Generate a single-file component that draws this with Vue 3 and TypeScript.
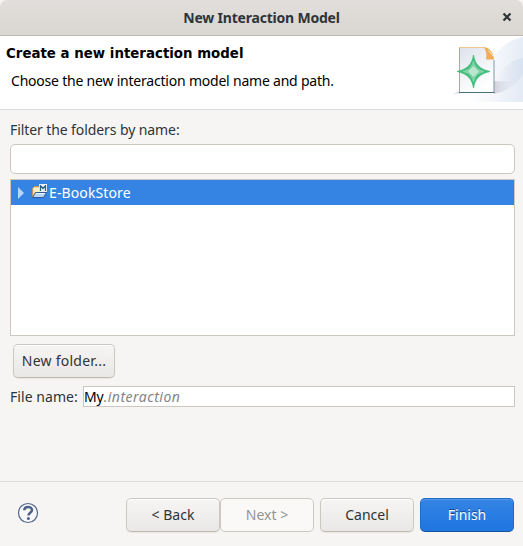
<script setup lang="ts">
import { ref } from 'vue'

interface WizardAction {
  id: string
  label: string
  disabled?: boolean
}

const filter = ref('')
const baseName = ref('My')
const actions: WizardAction[] = [
  { id: 'back', label: '< Back' },
  { id: 'next', label: 'Next >', disabled: true },
  { id: 'cancel', label: 'Cancel' },
  { id: 'finish', label: 'Finish' },
]
</script>

<template>
  <div class="dialog">
    <header class="titlebar">
      <span class="spacer"></span>
      <span class="caption">New Interaction Model</span>
      <span class="close">
        <svg width="10" height="10" viewBox="0 0 10 10"><path d="M1.500 1.500l7 7M8.500 1.500l-7 7" stroke="#2e3436" stroke-width="2.200" /></svg>
      </span>
    </header>

    <section class="banner">
      <div class="intro">
        <h1>Create a new interaction model</h1>
        <p>Choose the new interaction model name and path.</p>
      </div>
      <svg class="art" width="75" height="66" viewBox="0 0 75 66">
        <defs>
          <linearGradient id="swoosh" x1="0" y1="0.4" x2="1" y2="0.5">
            <stop offset="0.2" stop-color="#ffffff" />
            <stop offset="0.65" stop-color="#f2f5fa" />
            <stop offset="1" stop-color="#e4ebf5" />
          </linearGradient>
          <linearGradient id="band" x1="0" y1="0" x2="1" y2="0">
            <stop offset="0" stop-color="#d5dfee" stop-opacity="0" />
            <stop offset="1" stop-color="#d3deee" stop-opacity="0.7" />
          </linearGradient>
          <linearGradient id="page" x1="0" y1="0" x2="0.5" y2="1">
            <stop offset="0" stop-color="#dce2ec" />
            <stop offset="0.55" stop-color="#f1f3f7" />
            <stop offset="1" stop-color="#ffffff" />
          </linearGradient>
          <linearGradient id="shade" x1="0" y1="0" x2="1" y2="0">
            <stop offset="0" stop-color="#c6c2d2" stop-opacity="0.75" />
            <stop offset="1" stop-color="#d8dce8" stop-opacity="0" />
          </linearGradient>
        </defs>
        <path d="M75 1C60 4 50 12 42 26L10 57l10 9h55z" fill="url(#swoosh)" />
        <path d="M75 22C60 25 54 33 47 46v10c12-1 22-8 28-18z" fill="url(#band)" />
        <path d="M46 45l21 1c-2 6-12 10-21 12z" fill="url(#shade)" />
        <path d="M5 58l7-4v4z" fill="#e3e6ec" />
        <path d="M11.500 11.500h25l9 12v33h-34z" fill="url(#page)" />
        <path d="M11.500 11.500v45" stroke="#a9a89f" />
        <path d="M11.500 11.500h26" stroke="#efc58c" />
        <path d="M46 24v33" stroke="#7d99aa" />
        <path d="M11 56.500h35.500" stroke="#48717b" />
        <path d="M36 11.500h2c4 1 8 6 8 12h-8c1-5 0-9-2-12z" fill="#f4ab56" />
        <path d="M40.500 14.500l5 6" stroke="#eef0f4" stroke-width="0.900" />
        <path d="M25.500 19C27 28 31 33 42 35.500 31 38 27 43 25.500 52 24 43 20 38 9 35.500 20 33 24 28 25.500 19z" fill="#40bd7b" stroke="#35b973" stroke-width="0.700" />
        <path d="M25.500 25C27 31 30 34 36 35.500 30 37 27 40 25.500 46 24 40 21 37 15 35.500 21 34 24 31 25.500 25z" fill="#82d2a7" stroke="#82d2a7" />
        <path d="M25.500 30.500l5 5-5 5-5-5z" fill="#b8e7ce" stroke="#b8e7ce" />
      </svg>
    </section>

    <main class="body">
      <label class="filter-label" for="filter">Filter the folders by name:</label>
      <input id="filter" v-model="filter" class="filter" type="text" />
      <div class="tree">
        <div class="node">
          <svg class="arrow" width="6" height="12" viewBox="0 0 6 12"><path d="M0 0L6 6 0 12z" fill="#bad5f5" /></svg>
          <svg class="folder" width="16" height="16" viewBox="0 0 16 16">
            <path d="M1.500 13V4.500l2-2h4l1.500 2h4V9z" fill="#f9dda0" stroke="#c99554" />
            <path d="M3 4h5v4H3z" fill="#fff0c8" />
            <path d="M1.500 13.500l3-5h11l-3 5z" fill="#b9d9fb" stroke="#355898" />
            <path d="M5 9.500h9" stroke="#ecf7ff" />
            <path d="M8 0h8v8H8z" fill="#e4f1fb" />
            <path d="M9.500 1v6M14.500 1v6M9.500 1.500l2.500 3 2.500-3" fill="none" stroke="#286586" stroke-width="1.200" />
          </svg>
          <span class="node-name">E-BookStore</span>
        </div>
      </div>
      <button class="btn new-folder" type="button"><span>New folder...</span></button>
      <div class="file-row">
        <span class="file-label">File name:</span>
        <div class="file-field"><span class="base">{{ baseName }}</span><i>.interaction</i></div>
      </div>
    </main>

    <footer class="footer">
      <svg class="help" width="22" height="22" viewBox="0 0 22 22">
        <circle cx="11" cy="11" r="9.500" fill="#f8f8fa" stroke="#536788" stroke-width="1.200" />
        <path d="M7.300 8.200C7.300 3.800 15 3.900 15 8c0 2.800-3.500 2.700-3.500 5.400" fill="none" stroke="#4c6289" stroke-width="2.500" />
        <circle cx="11.400" cy="16.500" r="1.500" fill="#4c6289" />
      </svg>
      <div class="actions">
        <button v-for="action in actions" :key="action.id" type="button" class="btn" :class="action.id" :disabled="action.disabled">
          <span>{{ action.label }}</span>
        </button>
      </div>
    </footer>
  </div>
</template>

<style>
body { background: #f6f5f3; }
</style>

<style scoped>
.dialog {
  width: 523px;
  height: 546px;
  box-sizing: border-box;
  display: flex;
  flex-direction: column;
  overflow: hidden;
  background: #f6f5f3;
  color: #2e3436;
  font: 14px/20px "Noto Sans", sans-serif;
  white-space: nowrap;
}
.dialog * { box-sizing: border-box; }
.titlebar {
  height: 36px;
  flex: none;
  display: grid;
  grid-template-columns: 32px 1fr 32px;
  align-items: center;
  border-bottom: 1px solid #bfb8b1;
  border-radius: 7px 7px 0 0;
  background: linear-gradient(#e1dedb, #dad6d2);
}
.caption { text-align: center; font-weight: 700; letter-spacing: -0.2px; }
.close { display: flex; justify-content: center; margin-top: -2px; }
.banner {
  height: 74px;
  flex: none;
  display: flex;
  justify-content: space-between;
  background: #fff;
  border-bottom: 1px solid #dcdcda;
  color: #000;
}
.intro { padding: 8px 0 0 6px; }
h1 { margin: 0; font: bold 13.333px/20px "DejaVu Sans", sans-serif; letter-spacing: 0.02px; }
p { margin: 7px 0 0 5px; letter-spacing: -0.21px; }
.art { display: block; }
.body { flex: 1; display: flex; flex-direction: column; padding: 10px 8px 0 10px; }
.filter-label { height: 24px; letter-spacing: -0.09px; }
.filter {
  height: 30px;
  padding: 0 8px;
  border: 1px solid #cdc7c2;
  border-radius: 5px;
  background: #fff;
  font: inherit;
  outline: none;
}
.tree { height: 157px; margin-top: 5px; border: 1px solid #cdc7c2; background: #fff; }
.node { height: 25px; display: flex; align-items: center; padding-left: 7px; background: #3584e4; color: #fff; }
.folder { margin: -1px 0 0 7px; }
.node-name { margin-left: 2px; letter-spacing: 0.12px; }
.btn {
  height: 34px;
  padding: 0;
  border: 1px solid #cdc7c2;
  border-bottom-color: #bfb8b1;
  border-radius: 5px;
  background: linear-gradient(#f6f5f4, #e9e8e6);
  box-shadow: inset 0 1px #fff, 0 1px 1px rgba(0, 0, 0, 0.06);
  color: #2e3436;
  font: inherit;
}
.new-folder { width: 102px; margin: 8px 0 0 3px; letter-spacing: 0.25px; }
.file-row { display: flex; align-items: center; margin-top: 8px; }
.file-label { width: 73px; letter-spacing: 0.05px; }
.file-field { flex: 1; height: 21px; border: 1px solid #cdc7c2; background: #fff; line-height: 19px; letter-spacing: -0.1px; }
.base { color: #000; }
i { color: #858585; letter-spacing: 0.5px; }
.footer {
  height: 65px;
  flex: none;
  display: flex;
  justify-content: space-between;
  padding: 16px 9px 0 17px;
  border-top: 1px solid #dcdcda;
}
.help { margin-top: 4px; }
.actions { display: flex; gap: 6px; }
.actions .btn { width: 94px; }
.actions .next { margin-left: -6px; background: #faf9f8; border-color: #cdc7c2; box-shadow: none; color: #929595; }
.actions .finish {
  border-color: #1b6acb;
  border-bottom-color: #15539e;
  background: linear-gradient(#3584e4, #1f76e0);
  box-shadow: inset 0 1px #5898e8;
  color: #fff;
  text-shadow: 0 -1px rgba(0, 0, 0, 0.45);
}
</style>
